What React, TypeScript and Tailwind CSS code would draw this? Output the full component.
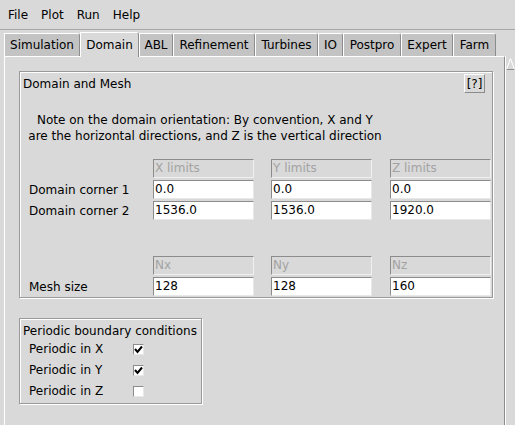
import React from "react";

const tabs: { label: string; w: string; sel?: boolean }[] = [
  { label: "Simulation", w: "w-[76px]" },
  { label: "Domain", w: "w-[59px]", sel: true },
  { label: "ABL", w: "w-[34px]" },
  { label: "Refinement", w: "w-[82px]" },
  { label: "Turbines", w: "w-[63px]" },
  { label: "IO", w: "w-[25px]" },
  { label: "Postpro", w: "w-[58px]" },
  { label: "Expert", w: "w-[52px]" },
  { label: "Farm", w: "w-[43px]" },
];

function Entry({ value, disabled }: { value: string; disabled?: boolean }) {
  return (
    <div
      className={
        disabled
          ? "w-[101px] h-[19px] border border-t-[#8c8c8c] border-l-[#8c8c8c] border-b-[#f0f0f0] border-r-[#f0f0f0] bg-[#d9d9d9] text-[#a3a3a3] pl-[1px] leading-[17px]"
          : "w-[101px] h-[19px] border border-t-[#8c8c8c] border-l-[#8c8c8c] border-b-[#e8e8e8] border-r-[#e8e8e8] bg-white text-black pl-[1px] leading-[17px]"
      }
    >
      {value}
    </div>
  );
}

function Row({ label, vals, disabled, className }: { label: string; vals: string[]; disabled?: boolean; className?: string }) {
  return (
    <div className={"flex items-center h-[19px] " + (className ?? "")}>
      <div className="w-[133px] pl-[9px]">{label}</div>
      <Entry value={vals[0]} disabled={disabled} />
      <div className="ml-[17px]">
        <Entry value={vals[1]} disabled={disabled} />
      </div>
      <div className="ml-[18px]">
        <Entry value={vals[2]} disabled={disabled} />
      </div>
    </div>
  );
}

function Check({ checked }: { checked?: boolean }) {
  return (
    <div className="w-[11px] h-[11px] bg-white border border-t-[#8c8c8c] border-l-[#8c8c8c] border-b-[#e8e8e8] border-r-[#e8e8e8] flex items-center justify-center">
      {checked && (
        <svg width="9" height="9" viewBox="0 0 9 9">
          <path d="M1 4 L3.5 7 L8 1.5" stroke="#000" strokeWidth="2" fill="none" />
        </svg>
      )}
    </div>
  );
}

export default function App() {
  return (
    <div className="w-[515px] h-[425px] bg-[#d9d9d9] font-['DejaVu_Sans',sans-serif] text-[12px] text-black overflow-hidden flex flex-col">
      {/* menu bar */}
      <div className="h-[30px] flex items-center gap-[13px] pl-[8px] border-b border-[#a8a8a8] shrink-0">
        <span>File</span>
        <span>Plot</span>
        <span>Run</span>
        <span>Help</span>
      </div>
      {/* tabs */}
      <div className="h-[26px] flex items-end pl-[4px] shrink-0 relative z-10">
        {tabs.map((t) =>
          t.sel ? (
            <div
              key={t.label}
              className={t.w + " h-[25px] bg-[#d9d9d9] border-t border-l border-white border-r border-r-[#8c8c8c] rounded-tr-[3px] flex items-center justify-center -mb-px"}
            >
              {t.label}
            </div>
          ) : (
            <div
              key={t.label}
              className={t.w + " h-[23px] bg-[#c3c3c3] border-t border-l border-white border-r border-r-[#8c8c8c] rounded-tr-[3px] flex items-center justify-center"}
            >
              {t.label}
            </div>
          )
        )}
      </div>
      {/* content */}
      <div className="flex-1 flex min-h-0">
        <div className="ml-[4px] w-[501px] border-t border-l border-white border-r border-r-[#8c8c8c] pt-[14px] pl-[14px]">
          {/* Domain and Mesh frame */}
          <div className="w-[474px] h-[227px] border border-[#9a9a9a] shadow-[inset_1px_1px_0_#fff,1px_1px_0_#fff]">
            <div className="flex justify-between items-start pl-[3px] pr-[7px] pt-[2px]">
              <span className="mt-[1px]">Domain and Mesh</span>
              <div className="w-[21px] h-[19px] border border-t-white border-l-white border-b-[#8c8c8c] border-r-[#8c8c8c] flex items-center justify-center leading-none">
                [?]
              </div>
            </div>
            <div className="w-[370px] mt-[19px] text-center leading-[16px]">
              Note on the domain orientation: By convention, X and Y
              <br />
              are the horizontal directions, and Z is the vertical direction
            </div>
            <div className="mt-[15px]">
              <Row label="" vals={["X limits", "Y limits", "Z limits"]} disabled />
              <Row label="Domain corner 1" vals={["0.0", "0.0", "0.0"]} className="mt-[2px]" />
              <Row label="Domain corner 2" vals={["1536.0", "1536.0", "1920.0"]} className="mt-[2px]" />
              <Row label="" vals={["Nx", "Ny", "Nz"]} disabled className="mt-[36px]" />
              <Row label="Mesh size" vals={["128", "128", "160"]} className="mt-[2px]" />
            </div>
          </div>
          {/* Periodic frame */}
          <div className="w-[183px] h-[86px] mt-[20px] border border-[#9a9a9a] shadow-[inset_1px_1px_0_#fff,1px_1px_0_#fff] pl-[3px] pt-[5px]">
            <div className="leading-[14px]">Periodic boundary conditions</div>
            {[
              ["Periodic in X", true],
              ["Periodic in Y", true],
              ["Periodic in Z", false],
            ].map(([l, c], i) => (
              <div key={i} className="flex items-center h-[20px] mt-[1px] first:mt-[5px] pl-[6px]">
                <span className="w-[104px]">{l as string}</span>
                <Check checked={c as boolean} />
              </div>
            ))}
          </div>
        </div>
        {/* scrollbar */}
        <div className="w-[10px] border-l border-white pt-[1px]">
          <svg width="10" height="14" viewBox="0 0 10 14">
            <path d="M0.5 12.5 L4.5 1.5 L8.5 12.5 Z" fill="#d9d9d9" stroke="#fff" strokeWidth="1" />
            <path d="M8.5 12.5 L0.5 12.5" stroke="#8c8c8c" strokeWidth="1" />
          </svg>
        </div>
      </div>
    </div>
  );
}
